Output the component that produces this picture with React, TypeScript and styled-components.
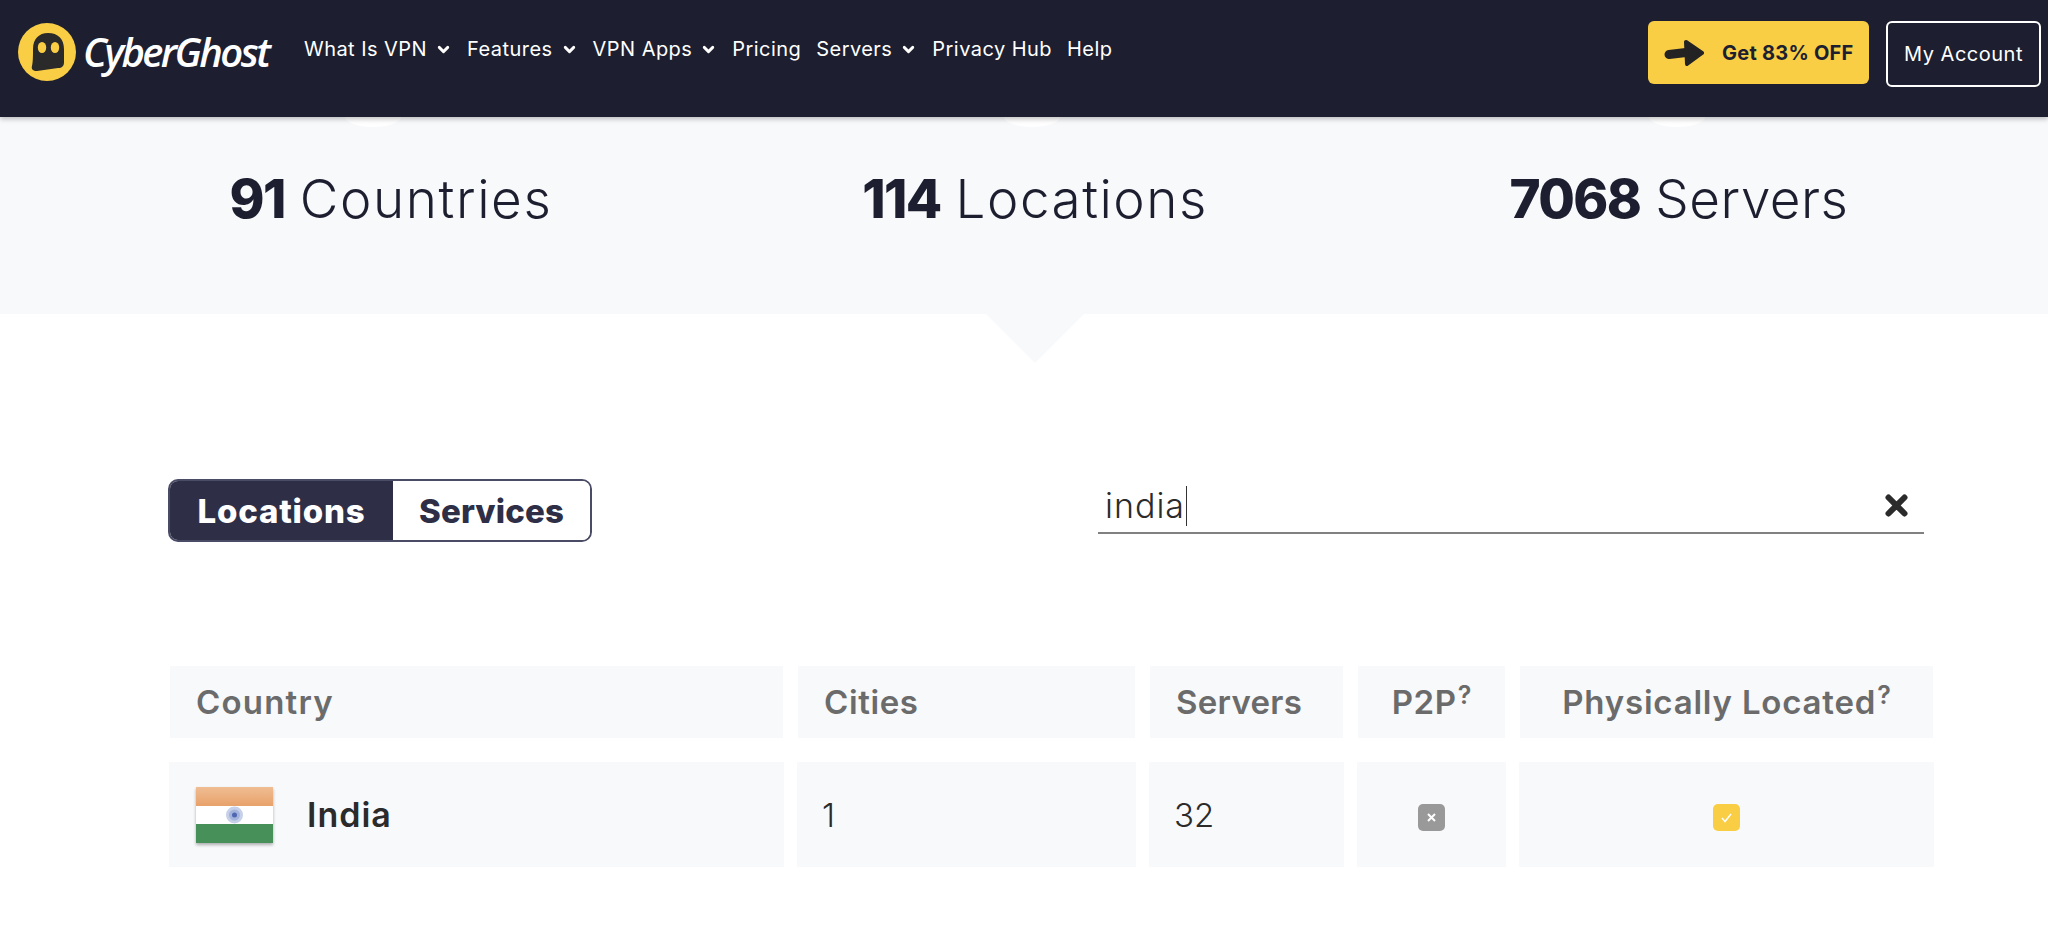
import styled, { createGlobalStyle } from 'styled-components';
import { ChevronDown } from 'lucide-react';

const GlobalStyle = createGlobalStyle`
    html, body {
        margin: 0;
        padding: 0;
        background: #fff;
        font-family: "Inter", "Liberation Sans", sans-serif;
        color: #1d1f30;
    }
`;

const Header = styled.header`
    position: relative;
    z-index: 1;
    display: flex;
    align-items: flex-start;
    height: 117px;
    padding: 0 7px 0 18px;
    box-sizing: border-box;
    background: #1d1f30;
    box-shadow: 0 2px 5px rgba(0, 0, 0, 0.25);
`;

const Logo = styled.div`
    display: flex;
    align-items: center;
    gap: 7px;
    width: 286px;
    padding-top: 23px;
    flex-shrink: 0;
`;

const LogoText = styled.span`
    font-family: "Open Sans", sans-serif;
    font-style: italic;
    font-weight: 600;
    font-size: 40px;
    letter-spacing: -2.6px;
    color: #fff;
    line-height: 58px;
`;

const Nav = styled.nav`
    display: flex;
    align-items: center;
    gap: 15px;
    height: 100px;
    flex: 1;
`;

const NavItem = styled.a`
    display: flex;
    align-items: center;
    gap: 8px;
    font-size: 20px;
    font-weight: 400;
    color: #fff;
    white-space: nowrap;
    letter-spacing: 0.45px;
    margin-top: -2px;
`;

const Actions = styled.div`
    display: flex;
    gap: 17px;
    padding-top: 21px;
`;

const OfferButton = styled.a`
    display: flex;
    align-items: center;
    gap: 18px;
    width: 221px;
    height: 63px;
    padding-left: 16px;
    box-sizing: border-box;
    border-radius: 6px;
    background: #f9ce44;
    color: #1d1f30;
    font-size: 20px;
    font-weight: 700;
    letter-spacing: 0.25px;
    white-space: nowrap;
`;

const AccountButton = styled.a`
    display: flex;
    align-items: center;
    justify-content: center;
    width: 155px;
    height: 66px;
    box-sizing: border-box;
    border: 2px solid #fff;
    border-radius: 6px;
    color: #fff;
    font-size: 20px;
    font-weight: 400;
    letter-spacing: 0.5px;
    white-space: nowrap;
`;

const StatsBand = styled.section`
    position: relative;
    display: grid;
    grid-template-columns: repeat(3, 644px);
    height: 197px;
    padding-left: 69px;
    box-sizing: border-box;
    background: #f8f9fb;

    &::after {
        content: '';
        position: absolute;
        top: 100%;
        left: 986px;
        border-left: 49px solid transparent;
        border-right: 49px solid transparent;
        border-top: 49px solid #f8f9fb;
    }
`;

const Stat = styled.div<{ $notch: number }>`
    position: relative;
    padding-top: 48px;
    text-align: center;
    font-size: 53px;
    line-height: 68px;
    font-weight: 300;
    color: #1d1f30;

    &::before {
        content: '';
        position: absolute;
        top: 0;
        left: 50%;
        width: 56px;
        height: 10px;
        margin-left: ${p => p.$notch - 28}px;
        border-radius: 0 0 28px 28px / 0 0 10px 10px;
        background: #fff;
    }

    b {
        font-weight: 800;
        letter-spacing: -1.6px;
    }
`;

const StatLabel = styled.span<{ $track: number }>`
    letter-spacing: ${p => p.$track}px;
`;

const Main = styled.main`
    padding: 165px 0 0 168px;
`;

const Controls = styled.div`
    display: flex;
    justify-content: space-between;
    align-items: flex-start;
    width: 1756px;
`;

const Toggle = styled.div`
    display: flex;
    width: 424px;
    height: 63px;
    box-sizing: border-box;
    border: 2px solid #4a4c66;
    border-radius: 10px;
    overflow: hidden;
`;

const ToggleButton = styled.button<{ $active?: boolean }>`
    flex: ${p => (p.$active ? '0 0 223px' : '1')};
    padding: 0;
    border: 0;
    font-family: inherit;
    font-size: 33px;
    font-weight: 800;
    letter-spacing: ${p => (p.$active ? '0.8px' : '0.1px')};
    background: ${p => (p.$active ? '#2e2f47' : '#fff')};
    color: ${p => (p.$active ? '#fff' : '#2e2f47')};
`;

const Search = styled.div`
    display: flex;
    align-items: center;
    justify-content: space-between;
    width: 826px;
    height: 55px;
    padding: 0 16px 0 7px;
    box-sizing: border-box;
    border-bottom: 2px solid #808080;
`;

const SearchText = styled.span`
    display: block;
    padding-right: 1px;
    border-right: 1.5px solid #333;
    font-size: 34px;
    font-weight: 300;
    line-height: 40px;
    color: #2b2b2b;
    letter-spacing: 1px;
`;

const Table = styled.div`
    display: grid;
    grid-template-columns: 615px 339px 195px 149px 415px;
    column-gap: 13px;
    row-gap: 24px;
    margin: 124px 0 0 1px;
`;

const HeadCell = styled.div<{ $center?: boolean; $track?: number }>`
    display: flex;
    align-items: center;
    justify-content: ${p => (p.$center ? 'center' : 'flex-start')};
    height: 72px;
    margin: 0 1px;
    padding-left: ${p => (p.$center ? '0' : '26px')};
    background: #f8f9fb;
    color: #6b6b6b;
    font-size: 33px;
    font-weight: 600;
    letter-spacing: ${p => p.$track ?? 0.6}px;
    white-space: nowrap;
`;

const Hint = styled.sup`
    font-size: 25px;
    font-weight: 600;
    line-height: 0;
    position: relative;
    top: -7px;
    margin-left: 1px;
    letter-spacing: 0;
`;

const Cell = styled.div<{ $center?: boolean }>`
    display: flex;
    align-items: center;
    justify-content: ${p => (p.$center ? 'center' : 'flex-start')};
    height: 105px;
    padding-left: ${p => (p.$center ? '0' : '25px')};
    background: #f8f9fb;
    color: #2b2b2b;
    font-size: 33px;
    font-weight: 300;
`;

const CountryName = styled.span`
    margin-left: 34px;
    font-size: 34px;
    font-weight: 600;
    letter-spacing: 1px;
`;

const Flag = styled.svg`
    display: block;
    width: 77px;
    height: 56px;
    margin-left: 2px;
    flex-shrink: 0;
    box-shadow: 0 2px 3px rgba(0, 0, 0, 0.3);
`;

const Mark = styled.span<{ $color: string }>`
    display: flex;
    align-items: center;
    justify-content: center;
    width: 27px;
    height: 27px;
    margin-top: 6px;
    border-radius: 5px;
    background: ${p => p.$color};
`;

const LogoMark = () => (
    <svg width="58" height="58" viewBox="0 0 58 58">
        <circle cx="29" cy="29" r="29" fill="#f9ce44" />
        <path
            d="M30 10c10 0 16 6 16 16v13c0 4-2 6-6 6l-21 3c-4 0-6-2-5-5 1-4 1-11 1-17 0-10 6-16 15-16z"
            fill="#2b2a2a"
        />
        <ellipse cx="24" cy="24.500" rx="4.200" ry="5.500" fill="#f9ce44" />
        <ellipse cx="37" cy="24.500" rx="4.200" ry="5.500" fill="#f9ce44" />
    </svg>
);

const ArrowIcon = () => (
    <svg width="40" height="28" viewBox="0 0 40 28">
        <path d="M5 15.500 L22 13.500" stroke="#232323" strokeWidth="9" strokeLinecap="round" />
        <path
            d="M22 3 L38 14 L23 25 Z"
            fill="#232323"
            stroke="#232323"
            strokeWidth="4"
            strokeLinejoin="round"
        />
    </svg>
);

const navItems = [
    { label: 'What Is VPN', menu: true },
    { label: 'Features', menu: true },
    { label: 'VPN Apps', menu: true },
    { label: 'Pricing', menu: false },
    { label: 'Servers', menu: true },
    { label: 'Privacy Hub', menu: false },
    { label: 'Help', menu: false },
];

export default function App() {
    return (
        <>
            <GlobalStyle />
            <Header>
                <Logo>
                    <LogoMark />
                    <LogoText>CyberGhost</LogoText>
                </Logo>
                <Nav>
                    {navItems.map(item => (
                        <NavItem key={item.label}>
                            {item.label}
                            {item.menu && <ChevronDown size={17} strokeWidth={4} />}
                        </NavItem>
                    ))}
                </Nav>
                <Actions>
                    <OfferButton>
                        <ArrowIcon />
                        Get 83% OFF
                    </OfferButton>
                    <AccountButton>My Account</AccountButton>
                </Actions>
            </Header>
            <StatsBand>
                <Stat $notch={-18}><b>91</b> <StatLabel $track={1.6}>Countries</StatLabel></Stat>
                <Stat $notch={-3}><b>114</b> <StatLabel $track={1.5}>Locations</StatLabel></Stat>
                <Stat $notch={-2}><b>7068</b> <StatLabel $track={0.5}>Servers</StatLabel></Stat>
            </StatsBand>
            <Main>
                <Controls>
                    <Toggle>
                        <ToggleButton $active>Locations</ToggleButton>
                        <ToggleButton>Services</ToggleButton>
                    </Toggle>
                    <Search>
                        <SearchText>india</SearchText>
                        <svg width="23" height="23" viewBox="0 0 23 23">
                            <path
                                d="M3.500 3.500 L19.500 19.500 M19.500 3.500 L3.500 19.500"
                                stroke="#2b2b2b"
                                strokeWidth="6"
                                strokeLinecap="round"
                            />
                        </svg>
                    </Search>
                </Controls>
                <Table>
                    <HeadCell $track={1.2}>Country</HeadCell>
                    <HeadCell>Cities</HeadCell>
                    <HeadCell $track={0.3}>Servers</HeadCell>
                    <HeadCell $center>P2P<Hint>?</Hint></HeadCell>
                    <HeadCell $center $track={0.8}>Physically Located<Hint>?</Hint></HeadCell>
                    <Cell>
                        <Flag viewBox="0 0 77 56">
                            <defs>
                                <linearGradient id="saffron" x1="0" y1="0" x2="0" y2="1">
                                    <stop offset="0" stopColor="#f0bd93" />
                                    <stop offset="1" stopColor="#e8a16a" />
                                </linearGradient>
                            </defs>
                            <rect width="77" height="19" fill="url(#saffron)" />
                            <rect y="19" width="77" height="18" fill="#fff" />
                            <rect y="37" width="77" height="19" fill="#47905a" />
                            <circle cx="38.500" cy="28" r="8.500" fill="#c6d0e8" />
                            <circle cx="38.500" cy="28" r="5.500" fill="#a3b3dc" />
                            <circle cx="38.500" cy="28" r="2.500" fill="#4f67b0" />
                        </Flag>
                        <CountryName>India</CountryName>
                    </Cell>
                    <Cell>1</Cell>
                    <Cell>32</Cell>
                    <Cell $center>
                        <Mark $color="#999">
                            <svg width="11" height="11" viewBox="0 0 11 11">
                                <path d="M2 2 L9 9 M9 2 L2 9" stroke="#fff" strokeWidth="2" />
                            </svg>
                        </Mark>
                    </Cell>
                    <Cell $center>
                        <Mark $color="#f9ce44">
                            <svg width="13" height="13" viewBox="0 0 13 13">
                                <path d="M2 7 L5 10.500 L11 3" stroke="#fff" strokeWidth="1.500" fill="none" />
                            </svg>
                        </Mark>
                    </Cell>
                </Table>
            </Main>
        </>
    );
}
